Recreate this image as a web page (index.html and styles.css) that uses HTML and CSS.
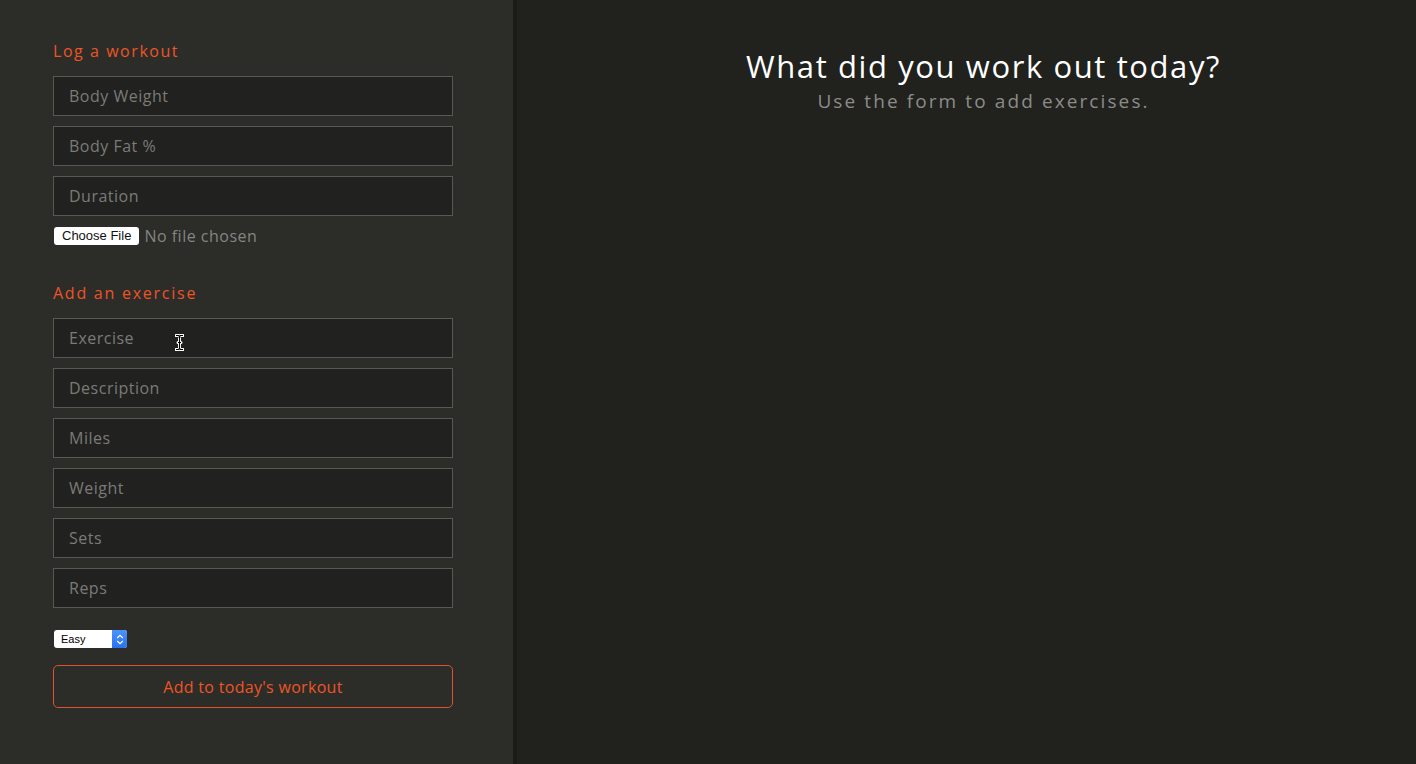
FILE: index.html
```html
<!DOCTYPE html>
<html lang="en">
<head>
<meta charset="utf-8">
<title>Workout</title>
<link rel="stylesheet" href="styles.css">
</head>
<body>
<div class="app">
  <aside class="sidebar">
    <form class="form">
      <h2 class="section-title">Log a workout</h2>
      <input class="field" type="text" placeholder="Body Weight">
      <input class="field" type="text" placeholder="Body Fat %">
      <input class="field" type="text" placeholder="Duration">
      <div class="file-row">
        <span class="file-btn">Choose File</span>
        <span class="file-name">No file chosen</span>
      </div>

      <h2 class="section-title second">Add an exercise</h2>
      <div class="field-wrap">
        <input class="field" type="text" placeholder="Exercise">
        <svg class="ibeam" width="9" height="17" viewBox="0 0 9 17">
          <path d="M1 1.5h2.5l1 1 1-1H8M4.5 2.5v12M1 15.5h2.5l1-1 1 1H8M3 8.5h3" fill="none" stroke="#fff" stroke-width="3" stroke-linecap="round"/>
          <path d="M1 1.5h2.5l1 1 1-1H8M4.5 2.5v12M1 15.5h2.5l1-1 1 1H8M3 8.5h3" fill="none" stroke="#000" stroke-width="1.1"/>
        </svg>
      </div>
      <input class="field" type="text" placeholder="Description">
      <input class="field" type="text" placeholder="Miles">
      <input class="field" type="text" placeholder="Weight">
      <input class="field" type="text" placeholder="Sets">
      <input class="field" type="text" placeholder="Reps">
      <div class="select-wrap">
        <select class="difficulty">
          <option>Easy</option>
          <option>Medium</option>
          <option>Hard</option>
        </select>
        <span class="select-arrow">
          <svg width="8" height="11" viewBox="0 0 8 11"><path d="M1.2 4 4 1.3 6.8 4M1.2 7 4 9.7 6.8 7" fill="none" stroke="#fff" stroke-width="1.2"/></svg>
        </span>
      </div>
      <button class="add-btn" type="button">Add to today's workout</button>
    </form>
  </aside>
  <div class="divider"></div>
  <main class="main">
    <h1 class="title">What did you work out today?</h1>
    <p class="subtitle">Use the form to add exercises.</p>
  </main>
</div>
</body>
</html>
```
FILE: styles.css
```css
* { box-sizing: border-box; }
html, body { margin: 0; height: 100%; }
body {
  font-family: "Open Sans", "Noto Sans", sans-serif;
  background: #21211e;
}
.app {
  display: flex;
  height: 764px;
}
.sidebar {
  width: 513px;
  background: #2c2c28;
  padding: 38px 0 0 53px;
}
.form {
  width: 400px;
  display: flex;
  flex-direction: column;
}
.section-title {
  margin: 0 0 12px;
  color: #ec5526;
  font-size: 16px;
  font-weight: 400;
  letter-spacing: 1.55px;
  line-height: 26px;
}
.section-title.second { margin-top: 35px; letter-spacing: 1.75px; }
.field {
  display: block;
  width: 400px;
  height: 40px;
  margin: 0 0 10px;
  padding: 0 15px;
  background: #21211f;
  border: 1px solid #575754;
  border-radius: 0;
  color: #ddd;
  font-family: inherit;
  font-size: 16px;
  letter-spacing: 0.5px;
  outline: none;
}
.field::placeholder { color: #7b7b78; }
.field-wrap { position: relative; }
.ibeam { position: absolute; left: 122px; top: 16px; }
.file-row {
  display: flex;
  align-items: center;
  height: 18px;
  margin: 1px 0 0 1px;
  gap: 5px;
}
.file-btn {
  background: #fff;
  border-radius: 3px;
  height: 18px;
  padding: 0 8px;
  font-family: "Liberation Sans", Arial, sans-serif;
  font-size: 13px;
  line-height: 18px;
  color: #111;
}
.file-name {
  color: #858582;
  font-size: 16px;
  letter-spacing: 0.5px;
}
.select-wrap {
  position: relative;
  width: 73px;
  height: 18px;
  margin: 12px 0 17px 1px;
}
.difficulty {
  display: block;
  appearance: none;
  -webkit-appearance: none;
  width: 73px;
  height: 18px;
  border: none;
  border-radius: 3px;
  background: #fff;
  padding: 0 0 0 7px;
  font-family: "Liberation Sans", Arial, sans-serif;
  font-size: 11px;
  color: #000;
  outline: none;
}
.select-arrow {
  position: absolute;
  right: 0;
  top: 0;
  width: 15px;
  height: 18px;
  border-radius: 0 3px 3px 0;
  background: linear-gradient(#4b93fb, #2a71f0);
  display: flex;
  align-items: center;
  justify-content: center;
}
.add-btn {
  width: 400px;
  height: 43px;
  background: transparent;
  border: 1px solid #e1522a;
  border-radius: 5px;
  color: #ec5526;
  font-family: inherit;
  font-size: 16px;
  letter-spacing: 0.3px;
  cursor: pointer;
}
.divider {
  width: 4px;
  background: #1b1b19;
}
.main {
  flex: 1;
  padding: 46px 0 0 34px;
  text-align: center;
}
.title {
  margin: 0;
  color: #fff;
  font-size: 31px;
  font-weight: 400;
  letter-spacing: 1.6px;
  line-height: 40px;
}
.subtitle {
  margin: 0;
  color: #8c8c89;
  font-size: 19px;
  letter-spacing: 2.1px;
  line-height: 30px;
}
```
